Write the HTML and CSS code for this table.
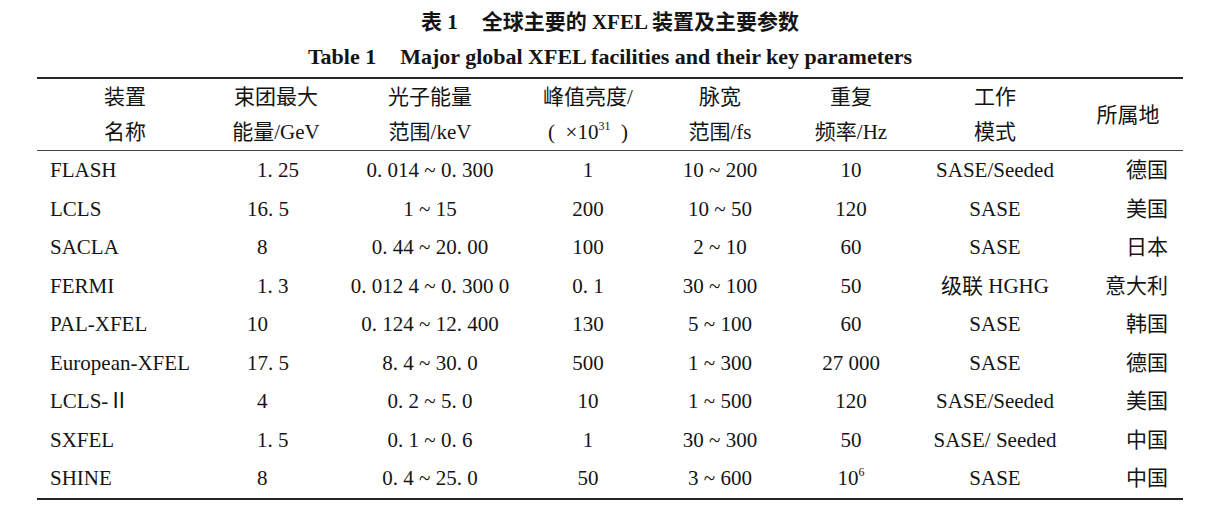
FILE: index.html
```html
<!DOCTYPE html>
<html lang="zh">
<head>
<meta charset="utf-8">
<title>表 1 全球主要的 XFEL 装置及主要参数</title>
<link rel="stylesheet" href="styles.css">
</head>
<body>
<div class="page">
  <h1 class="title-zh"><span class="tno">表 <b class="lat">1</b></span>全球主要的 <b class="lat">XFEL</b> 装置及主要参数</h1>
  <h2 class="title-en"><span class="tno">Table 1</span>Major global XFEL facilities and their key parameters</h2>
  <table class="data">
    <colgroup>
      <col class="c1"><col class="c2"><col class="c3"><col class="c4">
      <col class="c5"><col class="c6"><col class="c7"><col class="c8">
    </colgroup>
    <thead>
      <tr>
        <th>装置<br>名称</th>
        <th>束团最大<br>能量/GeV</th>
        <th>光子能量<br>范围/keV</th>
        <th>峰值亮度/<br>(&nbsp;&nbsp;×10<sup>31</sup>&nbsp;&nbsp;)</th>
        <th>脉宽<br>范围/fs</th>
        <th>重复<br>频率/Hz</th>
        <th>工作<br>模式</th>
        <th>所属地</th>
      </tr>
    </thead>
    <tbody>
      <tr><td class="name">FLASH</td><td class="e"><span class="one">1. 25</span></td><td>0. 014 ~ 0. 300</td><td>1</td><td>10 ~ 200</td><td>10</td><td>SASE/Seeded</td><td class="loc">德国</td></tr>
      <tr><td class="name">LCLS</td><td class="e">16. 5</td><td>1 ~ 15</td><td>200</td><td>10 ~ 50</td><td>120</td><td>SASE</td><td class="loc">美国</td></tr>
      <tr><td class="name">SACLA</td><td class="e"><span class="one">8</span></td><td>0. 44 ~ 20. 00</td><td>100</td><td>2 ~ 10</td><td>60</td><td>SASE</td><td class="loc">日本</td></tr>
      <tr><td class="name">FERMI</td><td class="e"><span class="one">1. 3</span></td><td>0. 012 4 ~ 0. 300 0</td><td>0. 1</td><td>30 ~ 100</td><td>50</td><td>级联 HGHG</td><td class="loc">意大利</td></tr>
      <tr><td class="name">PAL-XFEL</td><td class="e">10</td><td>0. 124 ~ 12. 400</td><td>130</td><td>5 ~ 100</td><td>60</td><td>SASE</td><td class="loc">韩国</td></tr>
      <tr><td class="name">European-XFEL</td><td class="e">17. 5</td><td>8. 4 ~ 30. 0</td><td>500</td><td>1 ~ 300</td><td>27 000</td><td>SASE</td><td class="loc">德国</td></tr>
      <tr><td class="name">LCLS-Ⅱ</td><td class="e"><span class="one">4</span></td><td>0. 2 ~ 5. 0</td><td>10</td><td>1 ~ 500</td><td>120</td><td>SASE/Seeded</td><td class="loc">美国</td></tr>
      <tr><td class="name">SXFEL</td><td class="e"><span class="one">1. 5</span></td><td>0. 1 ~ 0. 6</td><td>1</td><td>30 ~ 300</td><td>50</td><td>SASE/ Seeded</td><td class="loc">中国</td></tr>
      <tr><td class="name">SHINE</td><td class="e"><span class="one">8</span></td><td>0. 4 ~ 25. 0</td><td>50</td><td>3 ~ 600</td><td>10<sup>6</sup></td><td>SASE</td><td class="loc">中国</td></tr>
    </tbody>
  </table>
</div>
</body>
</html>
```

FILE: styles.css
```css
html, body {
  margin: 0;
  padding: 0;
  background: #ffffff;
}

body {
  color: #141414;
  font-family: "Liberation Serif", "Noto Sans CJK SC", serif;
}

.page {
  width: 1146px;
  padding: 10px 37px 0;
}

.title-zh {
  margin: 0;
  height: 24px;
  font-size: 21px;
  line-height: 24px;
  font-weight: 700;
  text-align: center;
  font-family: "Liberation Serif", "Noto Sans CJK SC", sans-serif;
}

.title-en {
  margin: 11px 0 8px;
  height: 24px;
  font-size: 22px;
  line-height: 24px;
  font-weight: 700;
  text-align: center;
}

.tno {
  margin-right: 24px;
}

.lat {
  font-weight: 700;
}

.data {
  width: 1146px;
  table-layout: fixed;
  border-collapse: collapse;
  font-size: 21px;
  border-top: 2px solid #262626;
  border-bottom: 2px solid #262626;
}

.c1 { width: 176px; }
.c2 { width: 126px; }
.c3 { width: 182px; }
.c4 { width: 134px; }
.c5 { width: 130px; }
.c6 { width: 132px; }
.c7 { width: 156px; }
.c8 { width: 110px; }

.data th {
  padding: 1px 0 0;
  height: 70px;
  font-weight: 400;
  line-height: 35px;
  text-align: center;
  vertical-align: middle;
  white-space: nowrap;
  border-bottom: 1px solid #444444;
}

.data td {
  padding: 0;
  height: 38.5px;
  line-height: 24px;
  text-align: center;
  vertical-align: middle;
  white-space: nowrap;
}

.data td.name {
  text-align: left;
  padding-left: 13px;
}

.data td.e {
  text-align: left;
  padding-left: 34px;
}

.one {
  padding-left: 10px;
}

.data td.loc {
  text-align: right;
  padding-right: 15px;
}

sup {
  font-size: 12px;
  line-height: 0;
  vertical-align: 9px;
}
```
